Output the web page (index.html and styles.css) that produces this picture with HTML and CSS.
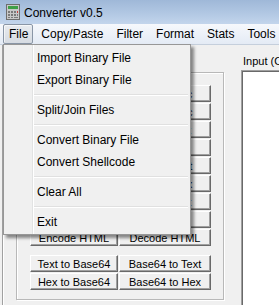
FILE: index.html
```html
<!DOCTYPE html>
<html lang="en">
<head>
  <meta charset="UTF-8" />
  <title>Converter v0.5</title>
  <link rel="stylesheet" href="styles.css">
</head>
<body>
  <div class="window">
    <div class="titlebar">
      <svg class="app-icon" width="16" height="16" viewBox="0 0 16 16">
        <rect x="1.5" y="0.5" width="13" height="15" fill="#c8c8c8" stroke="#6e6e6e"/>
        <rect x="3" y="2" width="10" height="3" fill="#3f9f46"/>
        <rect x="3" y="7" width="2" height="2" fill="#7a7a7a"/>
        <rect x="6" y="7" width="2" height="2" fill="#7a7a7a"/>
        <rect x="9" y="7" width="2" height="2" fill="#7a7a7a"/>
        <rect x="12" y="7" width="1" height="2" fill="#c83c3c"/>
        <rect x="3" y="10" width="2" height="2" fill="#7a7a7a"/>
        <rect x="6" y="10" width="2" height="2" fill="#7a7a7a"/>
        <rect x="9" y="10" width="2" height="2" fill="#7a7a7a"/>
        <rect x="12" y="10" width="1" height="2" fill="#7a7a7a"/>
        <rect x="3" y="13" width="2" height="1" fill="#7a7a7a"/>
        <rect x="6" y="13" width="2" height="1" fill="#7a7a7a"/>
        <rect x="9" y="13" width="4" height="1" fill="#7a7a7a"/>
      </svg>
      <span class="title">Converter v0.5</span>
    </div>

    <div class="menubar">
      <span class="menu-item open">File</span>
      <span class="menu-item">Copy/Paste</span>
      <span class="menu-item">Filter</span>
      <span class="menu-item">Format</span>
      <span class="menu-item">Stats</span>
      <span class="menu-item">Tools</span>

      <div class="dropdown">
        <div class="dd-item">Import Binary File</div>
        <div class="dd-item">Export Binary File</div>
        <div class="dd-sep"></div>
        <div class="dd-item">Split/Join Files</div>
        <div class="dd-sep"></div>
        <div class="dd-item">Convert Binary File</div>
        <div class="dd-item">Convert Shellcode</div>
        <div class="dd-sep"></div>
        <div class="dd-item">Clear All</div>
        <div class="dd-sep"></div>
        <div class="dd-item">Exit</div>
      </div>
    </div>

    <div class="client">
      <div class="panel">
        <div class="groupbox">
          <div class="btn-grid">
            <button class="btn">Text to Hex</button><button class="btn">Hex to Dec</button>
            <button class="btn">Hex to Text</button><button class="btn">Text to Dec</button>
            <button class="btn">Text to Oct</button><button class="btn">Hex to Oct</button>
            <button class="btn">Dec to Oct</button><button class="btn">Oct to Dec</button>
            <button class="btn">Text to Unicode</button><button class="btn">Dec to Text</button>
            <button class="btn">Hex to Dec</button><button class="btn">Dec to Hex</button>
            <button class="btn">Text to Oct</button><button class="btn">Oct to Text</button>
            <button class="btn">XOR</button><button class="btn">ROT</button>
            <button class="btn">Encode HTML</button><button class="btn">Decode HTML</button>
          </div>
          <div class="btn-grid second">
            <button class="btn">Text to Base64</button><button class="btn">Base64 to Text</button>
            <button class="btn">Hex to Base64</button><button class="btn">Base64 to Hex</button>
          </div>
        </div>
      </div>

      <div class="input-col">
        <div class="input-label">Input (Original)</div>
        <div class="textbox"></div>
      </div>
    </div>
  </div>
</body>
</html>
```

FILE: styles.css
```css
body {
  margin: 0;
  padding: 0;
  width: 279px;
  height: 305px;
  overflow: hidden;
  background-color: #f0f0f0;
  font-family: "Liberation Sans", Arial, sans-serif;
  color: #000;
}

.window {
  width: 279px;
  height: 305px;
  overflow: hidden;
}

.titlebar {
  height: 24px;
  display: flex;
  align-items: center;
  padding-left: 5px;
  box-sizing: border-box;
  background: linear-gradient(#9fb8d8, #b3c9e4 60%, #c3d5ec);
}

.app-icon {
  display: block;
  margin-right: 3px;
}

.title {
  font-size: 12px;
  padding-top: 1px;
}

.menubar {
  position: relative;
  height: 20px;
  display: flex;
  align-items: center;
  padding-left: 3px;
  border-bottom: 1px solid #c5cfdc;
  background: linear-gradient(#f6f8fc, #e4ebf5);
}

.menu-item {
  font-size: 12px;
  line-height: 18px;
  padding: 0 5px 0 6px;
  border: 1px solid transparent;
  border-radius: 2px;
  white-space: nowrap;
}

.menu-item.open {
  padding: 0 4px 0 5px;
  margin-right: 1px;
  border-color: #8a96a6;
  background: linear-gradient(#e8ebef, #d6dbe2);
  box-shadow: inset 1px 1px 0 rgba(255, 255, 255, 0.6);
}

.dropdown {
  position: absolute;
  left: 3px;
  top: 20px;
  width: 186px;
  padding: 2px 0 1px;
  border: 1px solid #979797;
  background: linear-gradient(to right, #f0f0f0 28px, #e2e3e3 28px, #e2e3e3 29px, #fff 29px, #fff 30px, #f0f0f0 30px);
  box-shadow: 3px 3px 3px rgba(0, 0, 0, 0.45);
  z-index: 5;
}

.dd-item {
  height: 22px;
  line-height: 22px;
  padding-left: 33px;
  font-size: 12px;
}

.dd-sep {
  height: 8px;
  margin-left: 30px;
  margin-right: 2px;
  background: linear-gradient(transparent 3px, #e0e0e0 3px, #e0e0e0 4px, #fff 4px, #fff 5px, transparent 5px);
}

.client {
  display: flex;
  height: 260px;
}

.panel {
  margin-left: 2px;
  padding-left: 13px;
  padding-top: 27px;
  border-left: 1px solid #a0a0a0;
  box-shadow: inset 1px 0 0 #fff;
}

.groupbox {
  box-sizing: border-box;
  width: 208px;
  height: 228px;
  padding: 12px 0 0 13px;
  border: 1px solid #b8b8b8;
  box-shadow: inset 1px 1px 0 #fff, 1px 1px 0 #fff;
}

.btn-grid {
  display: grid;
  grid-template-columns: 88px 92px;
  grid-auto-rows: 17px;
  column-gap: 1px;
  row-gap: 1px;
}

.btn-grid.second {
  margin-top: 9px;
}

.btn {
  margin: 0;
  padding: 0;
  font-family: "Liberation Sans", Arial, sans-serif;
  font-size: 11px;
  color: #000;
  background-color: #f0f0f0;
  border: 1px solid;
  border-color: #fff #696969 #696969 #fff;
  box-shadow: inset -1px -1px 0 #a0a0a0;
  white-space: nowrap;
  overflow: hidden;
}

.input-col {
  margin-left: 17px;
}

.input-label {
  font-size: 11px;
  margin-top: 10px;
  height: 15px;
  padding-left: 2px;
  white-space: nowrap;
}

.textbox {
  width: 120px;
  height: 260px;
  background-color: #fff;
  border-top: 1px solid #a0a0a0;
  border-left: 1px solid #a0a0a0;
  box-shadow: inset 1px 1px 0 #696969;
}
```
